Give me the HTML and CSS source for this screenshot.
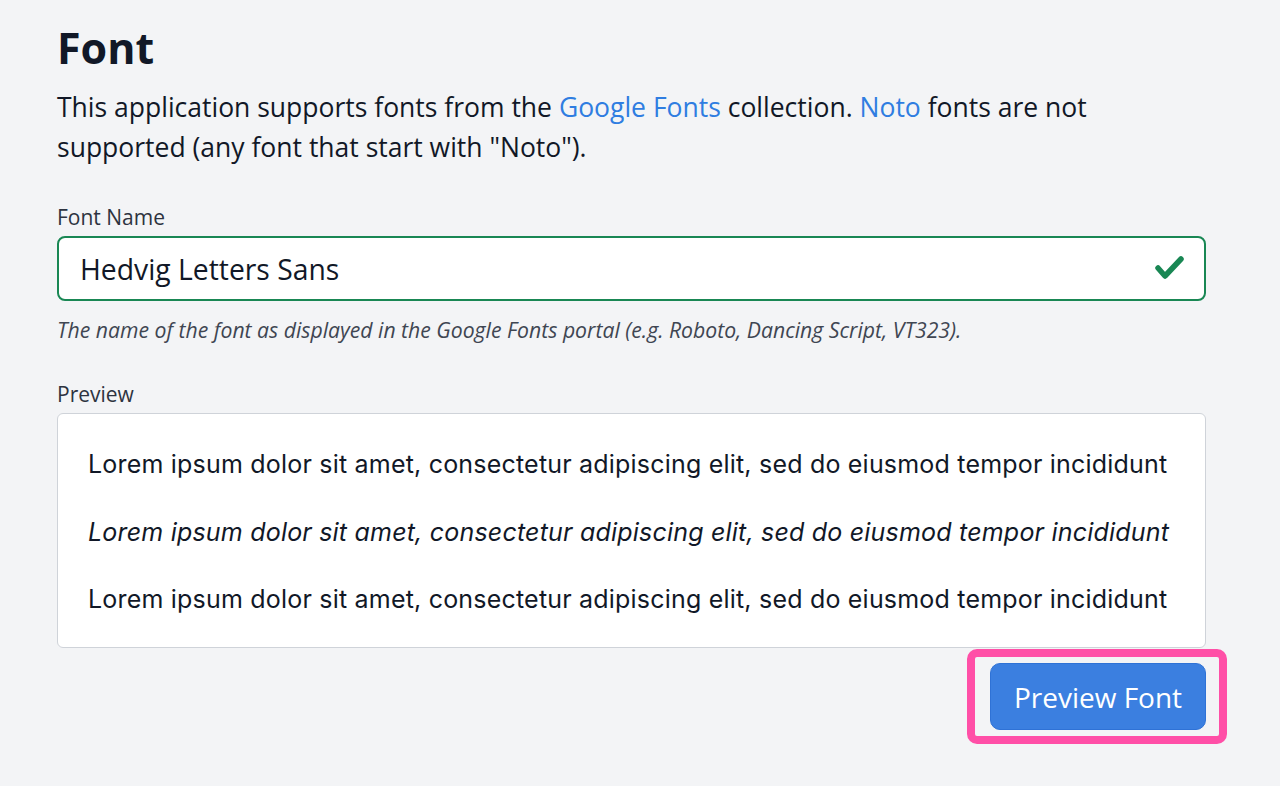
FILE: index.html
```html
<!DOCTYPE html>
<html lang="en">
<head>
<meta charset="utf-8">
<title>Font</title>
<link rel="stylesheet" href="styles.css">
</head>
<body>
<main class="page">
  <h1 class="title">Font</h1>
  <p class="intro">This application supports fonts from the <a href="#" class="link">Google Fonts</a> collection. <a href="#" class="link">Noto</a> fonts are not supported (any font that start with "Noto").</p>

  <div class="field">
    <label class="label" for="fontName">Font Name</label>
    <div class="input-wrap">
      <input id="fontName" class="input is-valid" type="text" value="Hedvig Letters Sans">
      <svg class="check" viewBox="0 0 32 28" width="32" height="28" aria-hidden="true">
        <polyline points="4,14 11,22 27,5" fill="none" stroke="#198754" stroke-width="5.5" stroke-linecap="round" stroke-linejoin="round"/>
      </svg>
    </div>
    <div class="help">The name of the font as displayed in the Google Fonts portal (e.g. Roboto, Dancing Script, VT323).</div>
  </div>

  <div class="field field-preview">
    <div class="label">Preview</div>
    <div class="preview">
      <p class="sample">Lorem ipsum dolor sit amet, consectetur adipiscing elit, sed do eiusmod tempor incididunt</p>
      <p class="sample sample-italic">Lorem ipsum dolor sit amet, consectetur adipiscing elit, sed do eiusmod tempor incididunt</p>
      <p class="sample">Lorem ipsum dolor sit amet, consectetur adipiscing elit, sed do eiusmod tempor incididunt</p>
    </div>
  </div>

  <div class="actions">
    <div class="focus-ring">
      <button class="btn" type="button">Preview Font</button>
    </div>
  </div>
</main>
</body>
</html>
```

FILE: styles.css
```css
html, body {
  margin: 0;
  padding: 0;
  background: #f3f4f6;
}

body {
  font-family: "Open Sans", "Liberation Sans", sans-serif;
  color: #111827;
}

.page {
  width: 1149px;
  margin-left: 57px;
  padding-top: 22px;
  padding-bottom: 40px;
}

.title {
  margin: 0;
  font-size: 43px;
  line-height: 52px;
  font-weight: 700;
  color: #111827;
}

.intro {
  margin: 13px 0 0;
  font-size: 26.5px;
  line-height: 40px;
  color: #111827;
}

.link {
  color: #2f7de1;
  text-decoration: none;
}

.field {
  margin-top: 36px;
}

.label {
  display: block;
  font-size: 21px;
  line-height: 28px;
  color: #2d3340;
  margin-bottom: 5px;
}

.input-wrap {
  position: relative;
}

.input {
  box-sizing: border-box;
  display: block;
  width: 100%;
  height: 65px;
  margin: 0;
  padding: 0 60px 0 21px;
  border: 2px solid #198754;
  border-radius: 8px;
  background: #fff;
  font-family: "Open Sans", "Liberation Sans", sans-serif;
  font-size: 28.3px;
  color: #111827;
  outline: none;
}

.check {
  position: absolute;
  right: 20px;
  top: 18px;
}

.help {
  margin-top: 15px;
  font-size: 21.2px;
  line-height: 28px;
  font-style: italic;
  color: #3f4652;
}

.preview {
  box-sizing: border-box;
  height: 235px;
  padding: 33px 30px 0 30px;
  background: #fff;
  border: 1px solid #cfd3d9;
  border-radius: 6px;
}

.sample {
  margin: 0 0 33.5px;
  font-family: "Inter", "Liberation Sans", sans-serif;
  font-size: 25px;
  line-height: 34px;
  color: #111827;
  white-space: nowrap;
  letter-spacing: 0.2px;
}

.sample-italic {
  font-style: italic;
}

.actions {
  display: flex;
  justify-content: flex-end;
  margin-top: 15px;
}

.focus-ring {
  position: relative;
  display: flex;
}

.focus-ring::after {
  content: "";
  position: absolute;
  top: -14px;
  bottom: -14px;
  left: -23px;
  right: -21px;
  border: 8px solid #ff4fa7;
  border-radius: 10px;
  pointer-events: none;
}

.btn {
  box-sizing: border-box;
  width: 216px;
  height: 67px;
  padding: 0;
  border: 1px solid #2f72d6;
  border-radius: 10px;
  background: #3b7fe0;
  color: #fff;
  font-family: "Open Sans", "Liberation Sans", sans-serif;
  font-size: 28px;
  cursor: pointer;
}
```
